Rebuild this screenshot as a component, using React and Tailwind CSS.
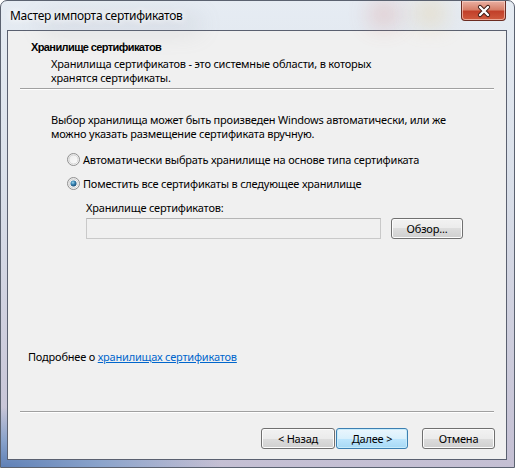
import React from 'react';

const font = { fontFamily: '"Noto Sans", "Open Sans", sans-serif' };
const boldFont = { fontFamily: '"Liberation Sans", "Noto Sans", sans-serif' };

const Radio = ({ checked }) => (
    <svg width="13" height="13" viewBox="0 0 13 13" className="shrink-0">
        <defs>
            <linearGradient id="radio-bg" x1="0" y1="0" x2="1" y2="1">
                <stop offset="0" stopColor="#e9e9e9" />
                <stop offset="1" stopColor="#ffffff" />
            </linearGradient>
            <radialGradient id="radio-dot" cx="0.4" cy="0.35" r="0.7">
                <stop offset="0" stopColor="#9fd8f0" />
                <stop offset="0.45" stopColor="#3a86b4" />
                <stop offset="1" stopColor="#15456e" />
            </radialGradient>
        </defs>
        <circle cx="6.5" cy="6.5" r="6" fill="url(#radio-bg)" stroke="#8f8f8f" strokeWidth="1" />
        <circle cx="6.5" cy="6.5" r="4.5" fill="none" stroke="#d4d4d4" strokeWidth="1" />
        {checked && <circle cx="6.5" cy="6.5" r="3" fill="url(#radio-dot)" />}
    </svg>
);

const Button = ({ children, isDefault = false, className = '' }) => (
    <button
        type="button"
        className={`h-[21px] rounded-[3px] border text-[11px] leading-none tracking-[-0.2px] text-black ${
            isDefault
                ? 'border-[#3c7fb1] bg-[linear-gradient(to_bottom,#eaf6fd_0%,#d9f0fc_50%,#bee6fd_50%,#a7d9f5_100%)] shadow-[inset_0_0_0_1px_#c8ecfb]'
                : 'border-[#707070] bg-[linear-gradient(to_bottom,#f2f2f2_0%,#ebebeb_50%,#dddddd_50%,#cfcfcf_100%)] shadow-[inset_0_0_0_1px_#fcfcfc]'
        } ${className}`}
        style={font}
    >
        {children}
    </button>
);

const Separator = () => (
    <div className="mx-[12px] h-[2px] border-t border-[#a0a0a0] border-b-white border-b" />
);

export default function App() {
    return (
        <div
            className="relative flex h-[468px] w-[515px] flex-col overflow-hidden rounded-t-[7px] border border-[#5b6270] bg-[radial-gradient(ellipse_220px_60px_at_0%_100%,#5f80b6_0%,#8aa3cb_45%,transparent_100%),linear-gradient(to_bottom,#e6ecf3_0%,#d9dfe9_40%,#c4bfd3_100%)]"
            style={font}
        >
            {/* blurred glass behind the title bar */}
            <div className="pointer-events-none absolute left-[370px] top-[2px] h-[22px] w-[26px] rounded-full bg-[#d9746a] opacity-40 blur-md" />
            <div className="pointer-events-none absolute left-[415px] top-[2px] h-[20px] w-[28px] rounded-full bg-[#e6c278] opacity-50 blur-md" />
            <div className="pointer-events-none absolute left-[40px] top-[16px] h-[14px] w-[160px] rounded-full bg-[#8a8f98] opacity-20 blur-md" />

            {/* title bar */}
            <div className="relative flex h-[29px] items-start">
                <span className="ml-[9px] mt-[7px] text-[12px] leading-[16px] tracking-[-0.3px] text-black [text-shadow:0_0_6px_#ffffff,0_0_10px_#ffffff]">
                    Мастер импорта сертификатов
                </span>
                <div className="ml-auto mr-[8px] flex h-[20px] w-[45px] items-center justify-center rounded-b-[4px] border border-t-0 border-[#6b2c22] bg-[linear-gradient(to_bottom,#eab0a2_0%,#d7806a_45%,#c2402a_55%,#cf5a3e_100%)] shadow-[inset_0_0_0_1px_rgba(255,220,210,0.6)]">
                    <svg width="16" height="14" viewBox="0 0 16 14">
                        <path d="M4 3 L12 11 M12 3 L4 11" stroke="#3b1a14" strokeWidth="4.2" strokeLinecap="round" />
                        <path d="M4 3 L12 11 M12 3 L4 11" stroke="#ffffff" strokeWidth="2.4" strokeLinecap="round" />
                    </svg>
                </div>
            </div>

            {/* client area */}
            <div className="ml-[6px] mr-[7px] mb-[7px] flex flex-1 flex-col border border-[#5a6070] bg-[#f0f0f0] text-[11px] tracking-[-0.2px] text-black">
                <div className="pl-[23px] pt-[8px]">
                    <div className="text-[11px] font-bold leading-[16px] tracking-[-0.6px]" style={boldFont}>
                        Хранилище сертификатов
                    </div>
                    <div className="mt-[2px] pl-[20px] leading-[14px]">
                        Хранилища сертификатов - это системные области, в которых
                        <br />
                        хранятся сертификаты.
                    </div>
                </div>
                <div className="mt-[3px]">
                    <Separator />
                </div>

                <div className="pl-[43px] pt-[23px] leading-[14px]">
                    Выбор хранилища может быть произведен Windows автоматически, или же
                    <br />
                    можно указать размещение сертификата вручную.
                </div>

                <div className="mt-[12px] flex flex-col gap-[11px] pl-[59px]">
                    <label className="flex h-[13px] items-center gap-[3px] leading-[13px]">
                        <Radio />
                        <span>Автоматически выбрать хранилище на основе типа сертификата</span>
                    </label>
                    <label className="flex h-[13px] items-center gap-[3px] leading-[13px]">
                        <Radio checked />
                        <span>Поместить все сертификаты в следующее хранилище</span>
                    </label>
                </div>

                <div className="mt-[10px] pl-[78px] leading-[16px]">Хранилище сертификатов:</div>
                <div className="mt-[2px] flex items-start pl-[78px]">
                    <div className="h-[21px] w-[295px] border border-[#c9c9c9] border-t-[#b5b5b5] bg-[#f0f0f0]" />
                    <Button className="ml-[10px] w-[72px]">Обзор...</Button>
                </div>

                <div className="mt-auto pl-[20px] leading-[16px]">
                    Подробнее о{' '}
                    <a href="#" className="text-[#0066cc] underline">
                        хранилищах сертификатов
                    </a>
                </div>

                <div className="mt-[46px]">
                    <Separator />
                </div>

                <div className="mt-[15px] mb-[10px] flex justify-end pr-[11px]">
                    <Button className="w-[74px]">&lt; Назад</Button>
                    <Button isDefault className="ml-[1px] w-[72px]">
                        Далее &gt;
                    </Button>
                    <Button className="ml-[14px] w-[73px]">Отмена</Button>
                </div>
            </div>
        </div>
    );
}
